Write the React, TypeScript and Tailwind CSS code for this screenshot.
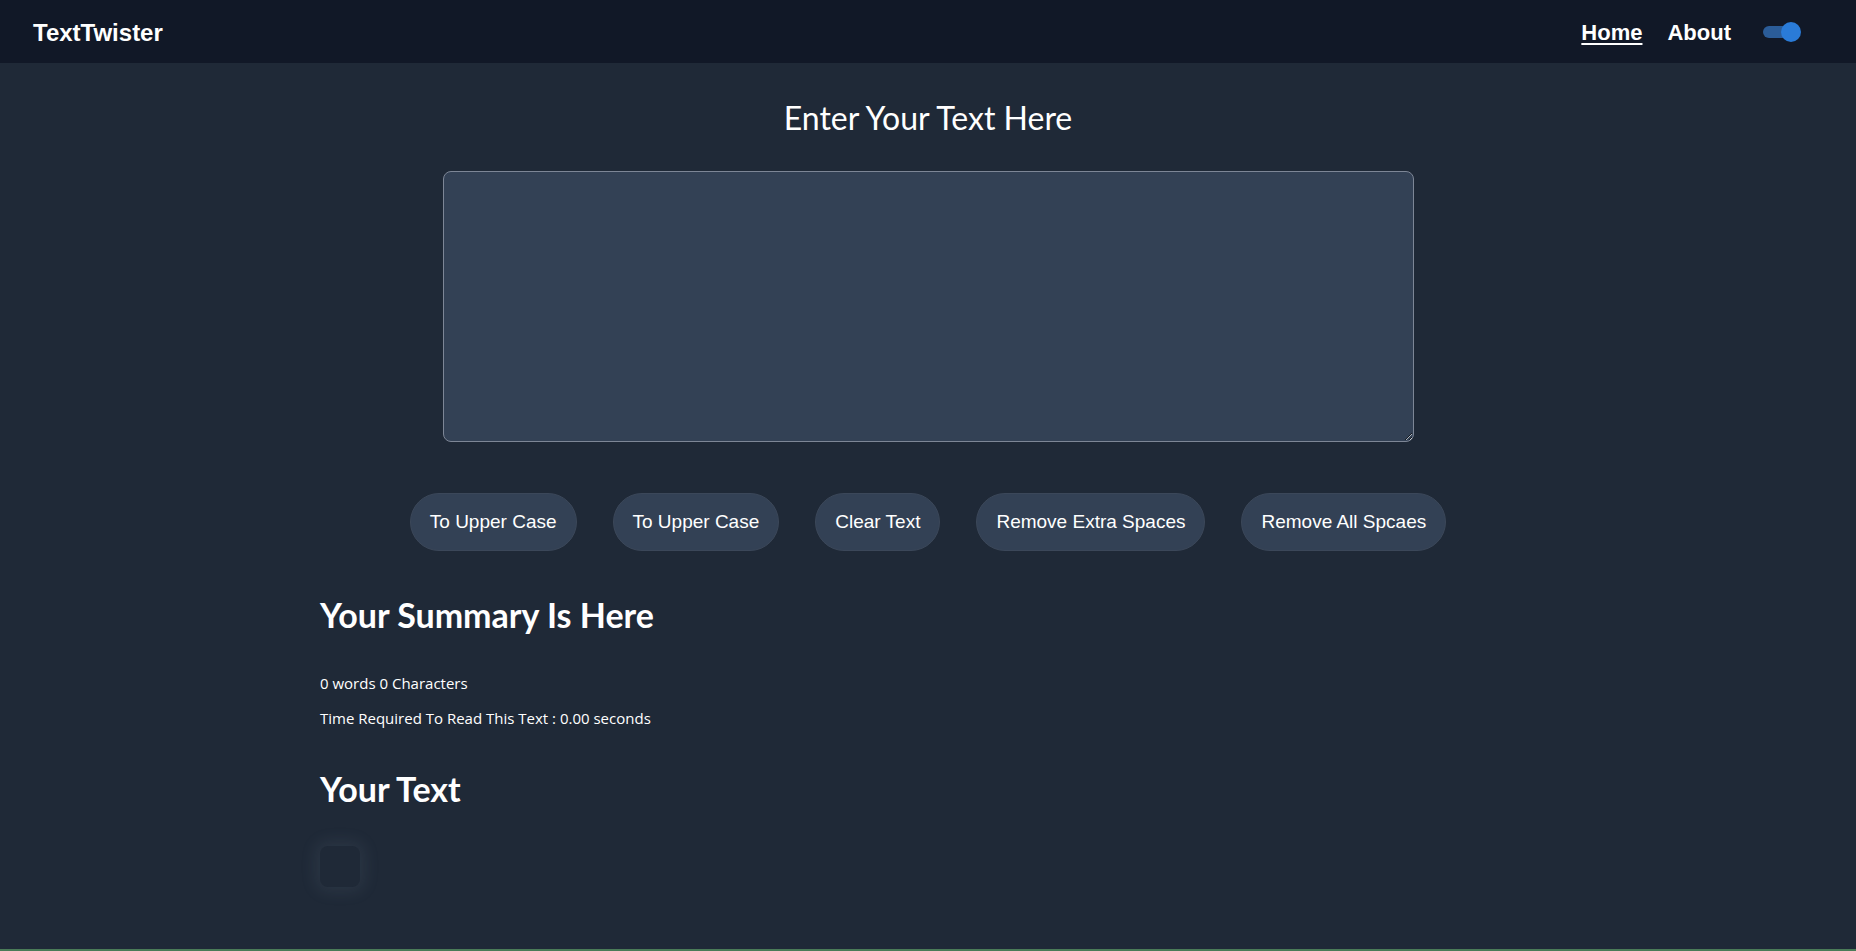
import { useState } from "react";

const actions = [
  "To Upper Case",
  "To Upper Case",
  "Clear Text",
  "Remove Extra Spaces",
  "Remove All Spcaes",
];

const uiFont = { fontFamily: '"Open Sans", "Noto Sans", sans-serif' };
const headFont = { fontFamily: 'Lato, "Open Sans", sans-serif' };

export default function App() {
  const [text, setText] = useState("");
  const [dark, setDark] = useState(true);

  const words = text.split(/\s+/).filter((w) => w.length > 0).length;
  const minutes = 0.008 * words;

  return (
    <div className="flex min-h-[951px] flex-col bg-[#1f2937] text-white">
      <nav className="flex h-[63px] items-center justify-between bg-[#111827] pl-[33px] pr-[55px] pt-[2px] font-['Liberation_Sans',Arial,sans-serif]">
        <a href="#" className="text-[24px] font-bold">
          TextTwister
        </a>
        <div className="flex items-center">
          <a href="#" className="text-[22px] font-bold underline underline-offset-[3px]">
            Home
          </a>
          <a href="#" className="ml-[25px] text-[22px] font-bold">
            About
          </a>
          <button
            onClick={() => setDark(!dark)}
            className="relative ml-[32px] -mt-[2px] h-[20px] w-[38px]"
            aria-label="toggle mode"
          >
            <span className="absolute left-0 top-[4px] h-[12px] w-[32px] rounded-full bg-[#2b5c98]" />
            <span className="absolute right-0 top-0 h-[20px] w-[20px] rounded-full bg-[#2a7bd8]" />
          </button>
        </div>
      </nav>

      <main className="flex-1" style={uiFont}>
        <h1 className="mt-[36px] text-center text-[32px] leading-[38px]" style={headFont}>
          Enter Your Text Here
        </h1>
        <div className="mt-[34px] flex justify-center">
          <textarea
            value={text}
            onChange={(e) => setText(e.target.value)}
            className="h-[271px] w-[971px] rounded-lg border border-[#7d8696] bg-[#334155] p-3 text-white outline-none"
          />
        </div>

        <div className="mt-[51px] flex justify-center gap-[36px] font-['Liberation_Sans',Arial,sans-serif]">
          {actions.map((label, i) => (
            <button
              key={i}
              className="rounded-full border border-[#3b4759] bg-[#334155] px-[19px] py-[17px] text-[19px] leading-[22px] text-white"
            >
              {label}
            </button>
          ))}
        </div>

        <section className="mx-auto mt-[45px] w-[1216px]">
          <h2 className="text-[34px] font-bold leading-[38px]" style={headFont}>
            Your Summary Is Here
          </h2>
          <p className="mt-[38px] text-[15px]">
            {words} words {text.length} Characters
          </p>
          <p className="mt-[12px] text-[15px]">
            Time Required To Read This Text : {(minutes * 60).toFixed(2)} seconds
          </p>
          <h2 className="mt-[41px] text-[34px] font-bold leading-[38px]" style={headFont}>
            Your Text
          </h2>
          <div className="mt-[38px] h-[41px] w-[40px] rounded-lg bg-[#1f2937] shadow-[0_0_16px_5px_rgba(148,163,184,0.1)]">
            {text}
          </div>
        </section>
      </main>
      <div className="h-[2px] bg-[#4a7b58]" />
    </div>
  );
}
